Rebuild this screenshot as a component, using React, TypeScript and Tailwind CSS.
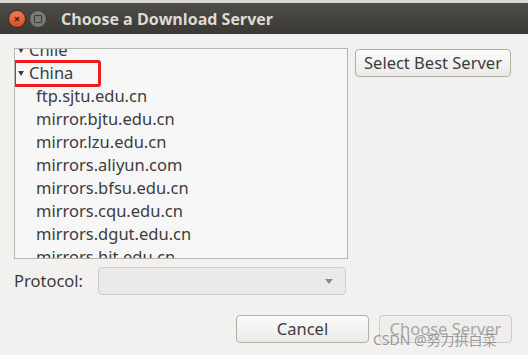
const mirrors = [
  'ftp.sjtu.edu.cn',
  'mirror.bjtu.edu.cn',
  'mirror.lzu.edu.cn',
  'mirrors.aliyun.com',
  'mirrors.bfsu.edu.cn',
  'mirrors.cqu.edu.cn',
  'mirrors.dgut.edu.cn',
  'mirrors.hit.edu.cn',
]

function Arrow() {
  return <span className="inline-block w-0 h-0 border-x-[3.5px] border-x-transparent border-t-[5px] border-t-[#3c3c3c] mr-[5px]" />
}

export default function App() {
  return (
    <div className="w-[528px] h-[355px] bg-[#f2f1f0] text-[#3c3c3c] text-[16.5px] relative overflow-hidden" style={{ fontFamily: '"Noto Sans", "Noto Sans CJK SC", sans-serif' }}>
      {/* title bar */}
      <div className="h-[3px] bg-[#dcdad5]" />
      <div className="h-[31px] bg-gradient-to-b from-[#4f4d48] to-[#3a3935] flex items-center pl-[8px]">
        <div className="w-[18px] h-[18px] rounded-full bg-gradient-to-b from-[#f37a4f] to-[#dc4a1e] border border-[#3a2a22] flex items-center justify-center text-[#3a1a10] text-[11px] font-bold leading-none">×</div>
        <div className="w-[18px] h-[18px] rounded-full bg-[#7a7872] border border-[#3a3935] ml-[3px] flex items-center justify-center">
          <div className="w-[8px] h-[8px] border border-[#3d3c38] rounded-[1px]" />
        </div>
        <span className="ml-[14px] text-[16px] font-bold text-[#dfdbd2]" style={{ fontFamily: '"Open Sans", sans-serif' }}>Choose a Download Server</span>
      </div>

      <div className="flex px-[14px] pt-[14px]">
        {/* server list */}
        <div className="w-[334px] h-[211px] border border-[#b6b5b0] bg-[#f6f6f6] overflow-hidden">
          <div className="mt-[-10px]">
            <div className="h-[23px] flex items-center pl-[3px]"><Arrow />Chile</div>
            <div className="h-[23px] flex items-center pl-[3px] relative">
              <Arrow />China
              <div className="absolute left-[-2px] top-[-2px] w-[88px] h-[27px] border-[3px] border-[#ee1c1c] rounded-[3px]" />
            </div>
            {mirrors.map((m) => (
              <div key={m} className="h-[23px] flex items-center pl-[21px]">{m}</div>
            ))}
          </div>
        </div>
        <div className="ml-[7px] pt-[1px]">
          <button className="h-[28px] w-[156px] rounded-[4px] border border-[#b0aea8] bg-gradient-to-b from-[#fbfbfa] to-[#ebeae8] text-[#3c3c3c]">Select Best Server</button>
        </div>
      </div>

      {/* protocol */}
      <div className="flex items-center px-[14px] mt-[8px]">
        <span className="w-[84px]">Protocol:</span>
        <div className="w-[248px] h-[28px] rounded-[4px] border border-[#cdccc8] bg-[#ebeae8] flex items-center justify-end pr-[12px]">
          <span className="w-0 h-0 border-x-[4.5px] border-x-transparent border-t-[5px] border-t-[#8c8b88]" />
        </div>
      </div>

      {/* buttons */}
      <div className="flex justify-end gap-[10px] pr-[16px] mt-[20px]">
        <button className="h-[28px] w-[133px] rounded-[4px] border border-[#b0aea8] bg-gradient-to-b from-[#fbfbfa] to-[#ebeae8] text-[#3c3c3c]">Cancel</button>
        <button className="h-[28px] w-[133px] rounded-[4px] border border-[#cdccc8] bg-[#efeeec] text-[#a7a6a2]">Choose Server</button>
      </div>

      <div className="absolute left-[373px] top-[329px] text-[14px] text-[#8d8d8d]/90">CSDN @努力拱白菜</div>
    </div>
  )
}
